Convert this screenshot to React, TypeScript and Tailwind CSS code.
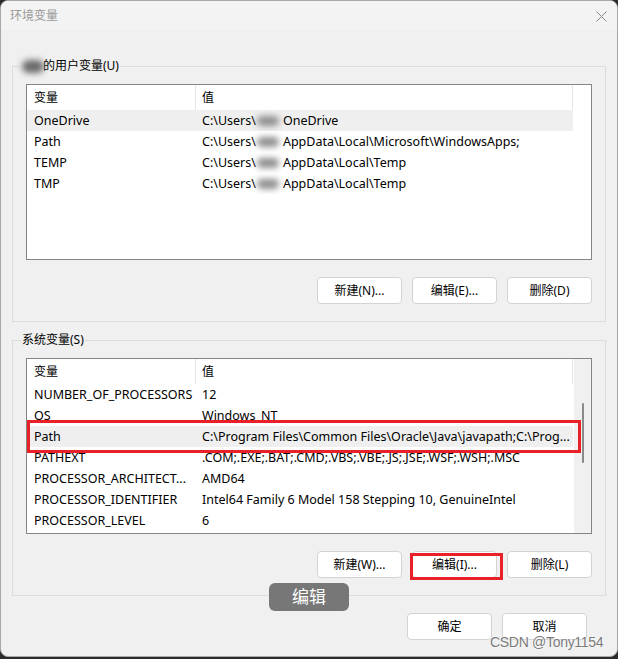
import React from "react";

type Row = { name: React.ReactNode; value: React.ReactNode };

function Blob({ dark }: { dark?: boolean }) {
  return (
    <span className={dark ? "relative inline-block w-[26px] h-[16px] shrink-0" : "relative inline-block w-[32px] h-[14px] shrink-0"}>
      <span
        className={
          dark
            ? "absolute left-[2px] right-[2px] top-[2px] bottom-[1px] rounded-full bg-[#6a6a6a] blur-[3px]"
            : "absolute left-[5px] right-[5px] top-[2px] bottom-[2px] rounded-full bg-[#8e8e8e] blur-[3px]"
        }
      />
    </span>
  );
}

function UserPath({ rest }: { rest: string }) {
  return (
    <>
      <span>C:\Users\</span>
      <span className="-ml-[4px] -mr-[1px] flex items-center">
        <Blob />
      </span>
      <span>{rest}</span>
    </>
  );
}

function ListView({
  rows,
  selected,
  scrollbar,
}: {
  rows: Row[];
  selected: number;
  scrollbar?: boolean;
}) {
  return (
    <div className="h-[176px] border border-[#858585] bg-white flex overflow-hidden">
      <div className="flex-1 flex flex-col">
        <div className="h-[25px] flex shrink-0">
          <div className="w-[169px] border-r border-[#e5e5e5] pl-[7px] flex items-center">变量</div>
          <div className="w-[377px] border-r border-[#e5e5e5] pl-[6px] flex items-center">值</div>
        </div>
        {rows.map((r, i) => (
          <div
            key={i}
            className={
              i === selected
                ? "h-[21px] w-[546px] flex shrink-0 bg-[#efefef] text-[12.5px]"
                : "h-[21px] w-[546px] flex shrink-0 text-[12.5px]"
            }
          >
            <div className="w-[169px] pl-[7px] flex items-center whitespace-nowrap overflow-hidden">
              {r.name}
            </div>
            <div className="w-[377px] pl-[6px] flex items-center whitespace-nowrap overflow-hidden">
              {r.value}
            </div>
          </div>
        ))}
      </div>
      {scrollbar && (
        <div className="w-[17px] bg-[#f0f0f0] shrink-0 pt-[44px] pl-[8px]">
          <div className="w-[2px] h-[60px] bg-[#8a8a8a] rounded-full" />
        </div>
      )}
    </div>
  );
}

function Btn({ children }: { children: React.ReactNode }) {
  return (
    <button className="w-[85px] h-[27px] bg-white border border-[#d3d3d3] rounded-[4px] text-[12px] text-black flex items-center justify-center">
      {children}
    </button>
  );
}

const userRows: Row[] = [
  { name: "OneDrive", value: <UserPath rest="OneDrive" /> },
  { name: "Path", value: <UserPath rest="AppData\Local\Microsoft\WindowsApps;" /> },
  { name: "TEMP", value: <UserPath rest="AppData\Local\Temp" /> },
  { name: "TMP", value: <UserPath rest="AppData\Local\Temp" /> },
];

const sysRows: Row[] = [
  { name: "NUMBER_OF_PROCESSORS", value: "12" },
  { name: "OS", value: "Windows_NT" },
  { name: "Path", value: "C:\\Program Files\\Common Files\\Oracle\\Java\\javapath;C:\\Prog..." },
  { name: "PATHEXT", value: ".COM;.EXE;.BAT;.CMD;.VBS;.VBE;.JS;.JSE;.WSF;.WSH;.MSC" },
  { name: "PROCESSOR_ARCHITECT...", value: "AMD64" },
  { name: "PROCESSOR_IDENTIFIER", value: "Intel64 Family 6 Model 158 Stepping 10, GenuineIntel" },
  { name: "PROCESSOR_LEVEL", value: "6" },
];

export default function App() {
  return (
    <div className="w-[618px] h-[659px] bg-[#2b2b2b] font-['Noto_Sans','Noto_Sans_CJK_SC',sans-serif] text-[12px] text-black leading-[16px]">
      <div className="relative w-[618px] h-[657px] bg-[#f0f0f0] rounded-[8px] border border-[#a8a8a8] overflow-hidden flex flex-col">
        {/* title bar */}
        <div className="h-[29px] bg-[#f3f3f3] flex items-center justify-between pl-[9px] pr-[10px] shrink-0">
          <span className="text-[#999999]">环境变量</span>
          <svg width="11" height="11" viewBox="0 0 11 11" className="mt-[1px]">
            <path d="M0.5 0.5L10.5 10.5M10.5 0.5L0.5 10.5" stroke="#8a8a8a" strokeWidth="1" fill="none" />
          </svg>
        </div>

        <div className="pl-[11px] pr-[11px] pt-[28px] flex flex-col">
          {/* user variables */}
          <fieldset className="border border-[#dcdcdc] px-[13px] pb-[17px] min-w-0">
            <legend className="-ml-[7px] px-[1px] flex items-center">
              <Blob dark />
              <span className="-ml-[3px]">的用户变量(U)</span>
            </legend>
            <div className="mt-[10px]">
              <ListView rows={userRows} selected={0} />
            </div>
            <div className="mt-[17px] flex justify-end gap-[10px]">
              <Btn>新建(N)...</Btn>
              <Btn>编辑(E)...</Btn>
              <Btn>删除(D)</Btn>
            </div>
          </fieldset>

          {/* system variables */}
          <fieldset className="mt-[10px] border border-[#dcdcdc] px-[13px] pb-[17px] min-w-0">
            <legend className="-ml-[5px] px-[1px]">系统变量(S)</legend>
            <div className="mt-[10px]">
              <ListView rows={sysRows} selected={2} scrollbar />
            </div>
            <div className="mt-[17px] flex justify-end gap-[10px]">
              <Btn>新建(W)...</Btn>
              <Btn>编辑(I)...</Btn>
              <Btn>删除(L)</Btn>
            </div>
          </fieldset>

          <div className="mt-[17px] flex justify-end gap-[10px] pr-[19px]">
            <Btn>确定</Btn>
            <Btn>取消</Btn>
          </div>
        </div>

        {/* annotations */}
        <div className="absolute left-[26px] top-[419px] w-[554px] h-[33px] border-[3px] border-[#e8202a]" />
        <div className="absolute left-[409px] top-[552px] w-[93px] h-[27px] border-[3px] border-[#e8202a]" />
        <div className="absolute left-[268px] top-[582px] w-[80px] h-[28px] rounded-[6px] bg-[#777777] flex items-center justify-center text-white text-[17px]">
          编辑
        </div>
        <div className="absolute left-[489px] top-[633px] text-[14px] tracking-[-0.3px] text-[#7a7a7a] font-['Liberation_Sans',sans-serif] [text-shadow:0_0_2px_#ffffff,0_0_1px_#ffffff]">
          CSDN @Tony1154
        </div>
      </div>
    </div>
  );
}
